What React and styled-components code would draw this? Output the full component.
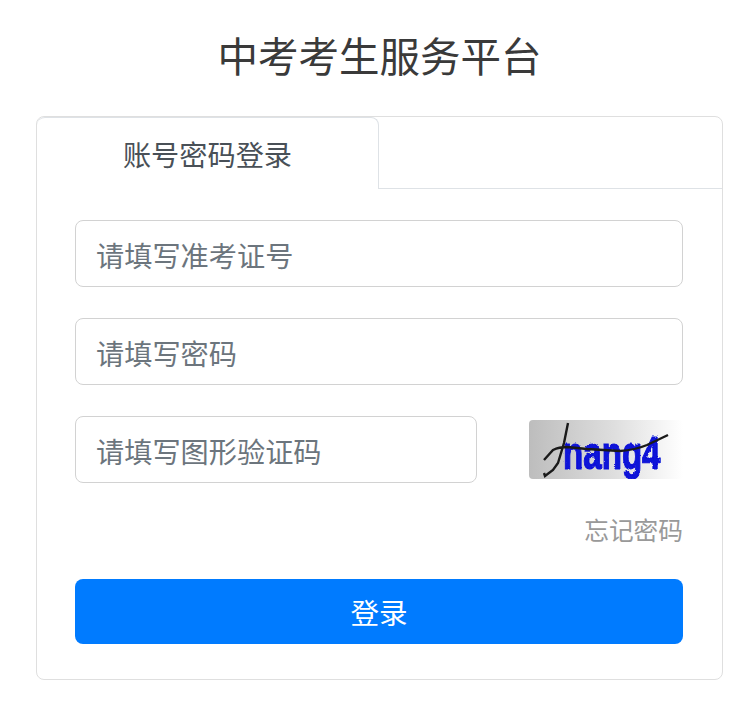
import React from 'react'
import styled, { createGlobalStyle } from 'styled-components'

const GlobalStyle = createGlobalStyle`
    html, body {
        margin: 0;
        background: #fff;
        font-family: "Liberation Sans", "Noto Sans CJK SC", sans-serif;
    }
    * {
        box-sizing: border-box;
    }
`

const Captcha = () => (
    <CaptchaBox viewBox="0 0 154 59" aria-label="验证码">
        <defs>
            <linearGradient id="captchaBg" x1="0" x2="1" y1="0" y2="0">
                <stop offset="0" stopColor="#bdbdbd" />
                <stop offset="0.55" stopColor="#dedede" />
                <stop offset="1" stopColor="#ffffff" />
            </linearGradient>
            <filter id="captchaRough">
                <feTurbulence type="fractalNoise" baseFrequency="0.3" numOctaves="2" seed="3" />
                <feDisplacementMap in="SourceGraphic" scale="3" />
                <feGaussianBlur stdDeviation="0.5" />
            </filter>
        </defs>
        <rect width="154" height="59" fill="url(#captchaBg)" />
        <text
            transform="translate(34 49) scale(0.72 1)"
            fill="#0a12d8"
            stroke="#0a12d8"
            strokeWidth="1.2"
            fontFamily="Liberation Sans, sans-serif"
            fontWeight="700"
            fontSize="46"
            filter="url(#captchaRough)"
        >
            nang4
        </text>
        <path
            d="M39 3 L35 23 L29 43 L24 50 L16 56 L15 53 M15 40 L24 30 Q30 27 38 27 Q48 28 58 29 L91 31 Q106 30 118 25 L139 15"
            fill="none"
            stroke="#1a1a1a"
            strokeWidth="2.4"
        />
    </CaptchaBox>
)

const App = () => {
    return (
        <Wrapper>
            <GlobalStyle />
            <Title>中考考生服务平台</Title>
            <Card>
                <TabBar>
                    <Tab>账号密码登录</Tab>
                </TabBar>
                <Form>
                    <Input placeholder="请填写准考证号" />
                    <Input placeholder="请填写密码" />
                    <CaptchaRow>
                        <Input placeholder="请填写图形验证码" $short />
                        <Captcha />
                    </CaptchaRow>
                    <Forgot>忘记密码</Forgot>
                    <Submit type="button">登录</Submit>
                </Form>
            </Card>
        </Wrapper>
    )
}

const Wrapper = styled.main`
    width: 735px;
    height: 707px;
    padding: 0 12px 0 36px;
    overflow: hidden;
`

const Title = styled.h1`
    margin: 0;
    padding-top: 31px;
    height: 116px;
    font-size: 40.5px;
    font-weight: 400;
    line-height: 54px;
    color: #3a3a3a;
    text-align: center;
`

const Card = styled.section`
    width: 687px;
    height: 564px;
    border: 1px solid #dfdfdf;
    border-radius: 8px;
`

const TabBar = styled.div`
    height: 72px;
    border-bottom: 1px solid #dee2e6;
`

const Tab = styled.div`
    width: 342px;
    height: 72px;
    border: 1px solid #dee2e6;
    border-bottom: 0;
    border-left: 0;
    border-radius: 8px 8px 0 0;
    background: #fff;
    color: #495057;
    font-size: 28.2px;
    line-height: 76px;
    text-align: center;
`

const Form = styled.form`
    display: flex;
    flex-direction: column;
    padding: 31px 39px 0 38px;
`

const Input = styled.input`
    display: block;
    width: ${props => (props.$short ? '402px' : '100%')};
    height: 67px;
    margin-bottom: ${props => (props.$short ? '0' : '31px')};
    padding: 7px 21px 0 20px;
    border: 1px solid #d2d2d2;
    border-radius: 8px;
    background: #fff;
    color: #495057;
    font-family: inherit;
    font-size: 28.2px;
    outline: none;

    &::placeholder {
        color: #6c757d;
        opacity: 1;
    }
`

const CaptchaRow = styled.div`
    display: flex;
    align-items: center;
    justify-content: space-between;
`

const CaptchaBox = styled.svg`
    display: block;
    width: 154px;
    height: 59px;
    border-radius: 4px;
`

const Forgot = styled.a`
    align-self: flex-end;
    margin-top: 32px;
    color: #999;
    font-size: 24.7px;
    line-height: 33px;
`

const Submit = styled.button`
    height: 65px;
    margin-top: 31px;
    border: 0;
    border-radius: 8px;
    background: #007bff;
    color: #fff;
    font-family: inherit;
    font-size: 28.5px;
`

export default App
